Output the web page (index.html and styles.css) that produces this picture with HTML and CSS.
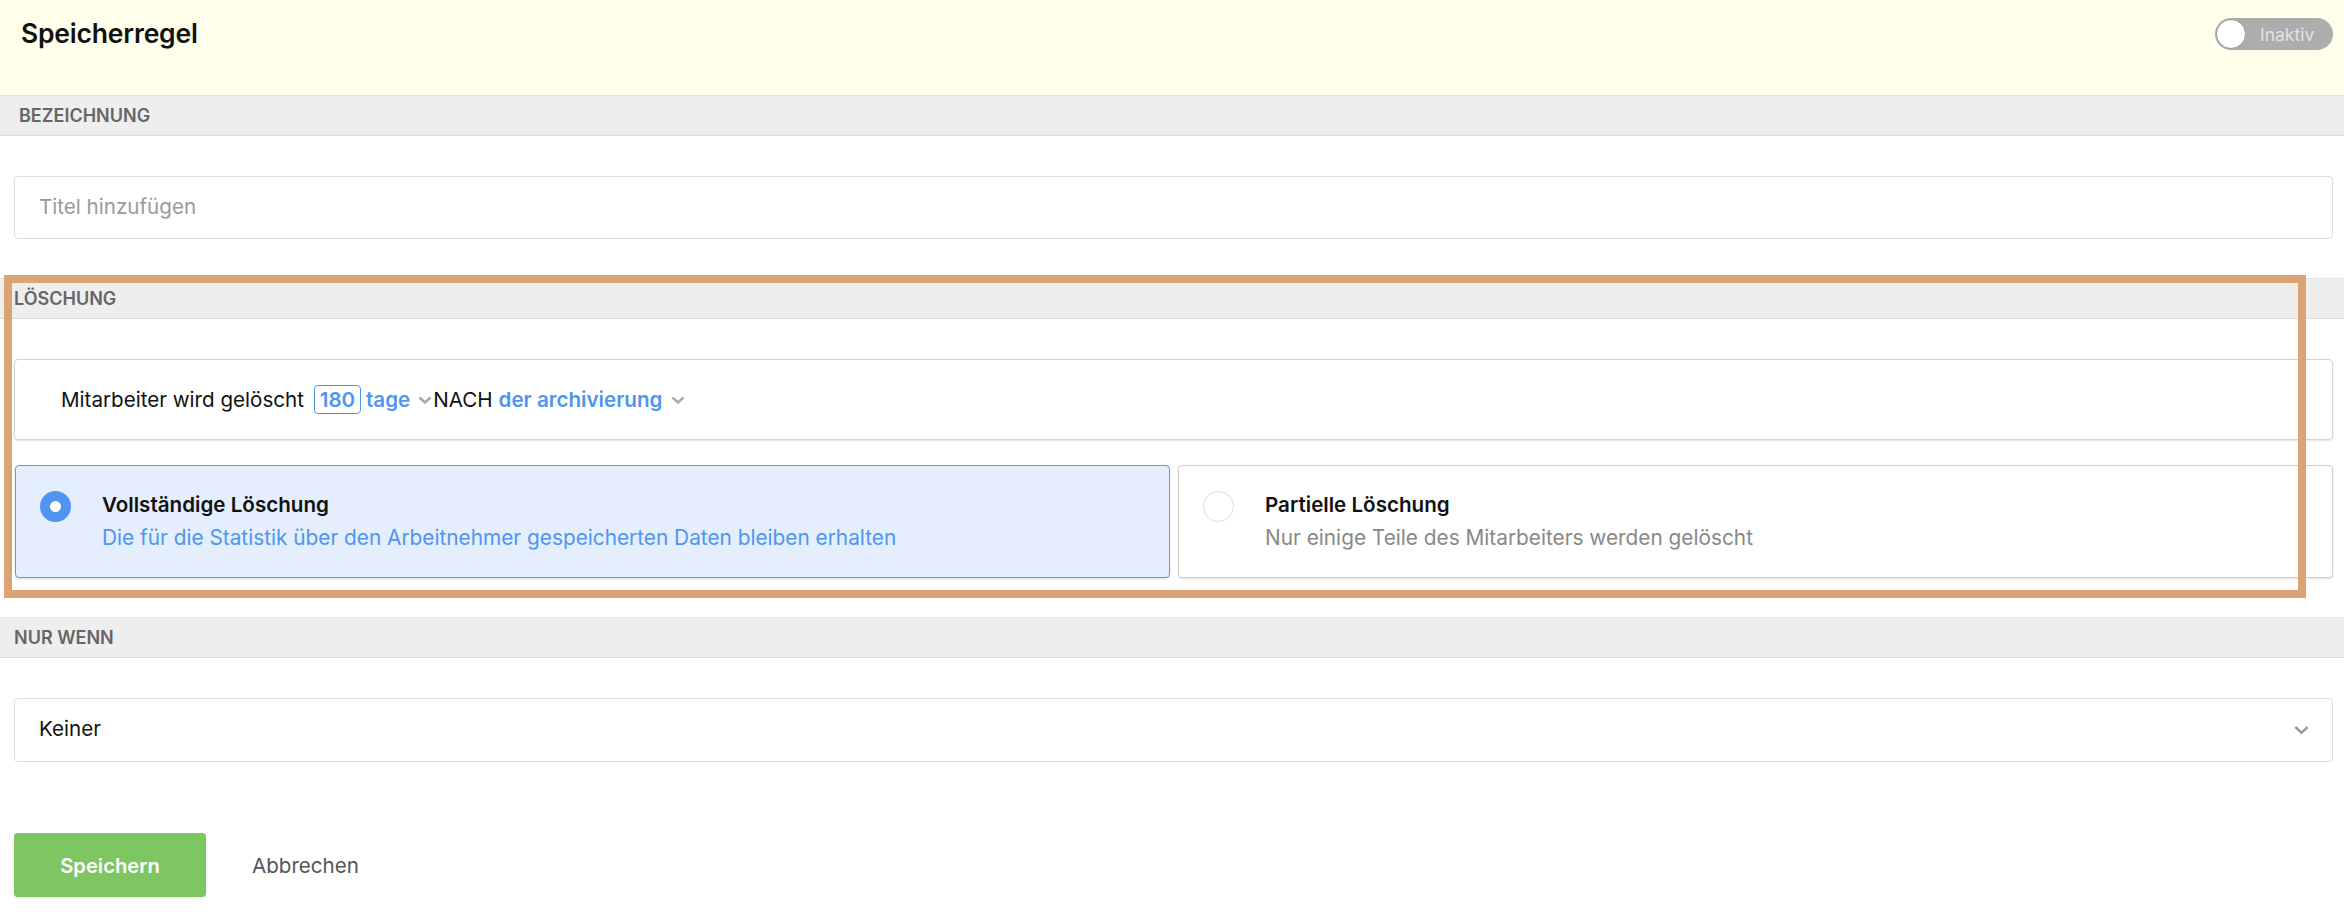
FILE: index.html
```html
<!DOCTYPE html>
<html lang="de">
<head>
<meta charset="utf-8">
<title>Speicherregel</title>
<link rel="stylesheet" href="styles.css">
</head>
<body>
<div class="page">
  <header class="topbar">
    <h1 class="title">Speicherregel</h1>
    <div class="toggle">
      <span class="toggle-knob"></span>
      <span class="toggle-label">Inaktiv</span>
    </div>
  </header>

  <section class="section">
    <div class="section-head section-head-first">BEZEICHNUNG</div>
    <div class="section-body">
      <div class="field"><span class="placeholder">Titel hinzufügen</span></div>
    </div>
  </section>

  <section class="section">
    <div class="section-head">LÖSCHUNG</div>
    <div class="section-body">
      <div class="condition">
        <span class="cond-text">Mitarbeiter wird gelöscht</span>
        <span class="num-box">180</span>
        <span class="blue">tage</span>
        <svg class="chev-small" viewBox="0 0 14 8" width="14" height="8"><path d="M1.5 1.5 L7 6.5 L12.5 1.5" fill="none" stroke="#aaa" stroke-width="2.5"/></svg>
        <span class="cond-text">NACH</span>
        <span class="blue blue-gap">der archivierung</span>
        <svg class="chev-small chev-gap" viewBox="0 0 14 8" width="14" height="8"><path d="M1.5 1.5 L7 6.5 L12.5 1.5" fill="none" stroke="#aaa" stroke-width="2.5"/></svg>
      </div>
      <div class="choices">
        <div class="choice choice-selected">
          <span class="radio radio-on"></span>
          <div class="choice-text">
            <div class="choice-title">Vollständige Löschung</div>
            <div class="choice-desc">Die für die Statistik über den Arbeitnehmer gespeicherten Daten bleiben erhalten</div>
          </div>
        </div>
        <div class="choice">
          <span class="radio"></span>
          <div class="choice-text">
            <div class="choice-title">Partielle Löschung</div>
            <div class="choice-desc">Nur einige Teile des Mitarbeiters werden gelöscht</div>
          </div>
        </div>
      </div>
    </div>
  </section>

  <section class="section">
    <div class="section-head">NUR WENN</div>
    <div class="section-body">
      <div class="field select">
        <span class="value">Keiner</span>
        <svg class="chev" viewBox="0 0 16 10" width="15" height="10"><path d="M1.5 1.8 L8 8 L14.5 1.8" fill="none" stroke="#999" stroke-width="2.6"/></svg>
      </div>
    </div>
  </section>

  <footer class="actions">
    <button class="btn-save" type="button">Speichern</button>
    <button class="btn-cancel" type="button">Abbrechen</button>
  </footer>

  <div class="highlight"></div>
</div>
</body>
</html>
```

FILE: styles.css
```css
* { box-sizing: border-box; }

html, body {
  margin: 0;
  padding: 0;
  background: #ffffff;
}

body {
  font-family: Inter, "Liberation Sans", Arial, sans-serif;
  color: #111;
}

.page {
  position: relative;
  width: 2344px;
  min-height: 916px;
}

.topbar {
  height: 95px;
  background: #ffffeb;
  display: flex;
  justify-content: space-between;
  align-items: flex-start;
  padding: 17px 11px 0 21px;
}

.title {
  margin: 0;
  font-size: 26.5px;
  line-height: 32px;
  font-weight: 600;
  color: #111;
  letter-spacing: -0.2px;
}

.toggle {
  width: 118px;
  height: 32px;
  margin-top: 1px;
  border-radius: 16px;
  background: #adadad;
  display: flex;
  align-items: center;
  padding: 0 0 0 1px;
}

.toggle-knob {
  width: 30px;
  height: 30px;
  border-radius: 50%;
  background: #fff;
  border: 1px solid #9a9a9a;
}

.toggle-label {
  margin-left: 14px;
  font-size: 17.5px;
  color: #e2e2e2;
}

.section-head {
  height: 41px;
  background: #eeeeee;
  border-top: 1px solid #e3e3e3;
  border-bottom: 1px solid #dcdcdc;
  display: flex;
  align-items: center;
  padding-left: 14px;
  font-size: 18px;
  font-weight: 600;
  color: #666;
}

.section-head-first {
  padding-left: 19px;
}

.section-body {
  padding: 40px 11px 39px 14px;
}

.field {
  height: 63px;
  border: 1px solid #dddddd;
  border-radius: 4px;
  display: flex;
  align-items: center;
  padding: 0 0 3px 24px;
  font-size: 20.6px;
}

.placeholder {
  color: #9a9a9a;
}

.select {
  height: 64px;
  justify-content: space-between;
  padding-right: 23px;
}

.value {
  color: #111;
}

.chev {
  display: block;
  margin-top: 2px;
}

.condition {
  height: 81px;
  border: 1px solid #d2d2d2;
  border-radius: 4px;
  box-shadow: 0 1px 2px rgba(0, 0, 0, 0.12);
  display: flex;
  align-items: center;
  padding-left: 46px;
  font-size: 20.6px;
}

.cond-text {
  color: #111;
}

.num-box {
  margin: 0 5px 0 10px;
  width: 47px;
  height: 29px;
  border: 1px solid #4f95f0;
  border-radius: 4px;
  display: flex;
  align-items: center;
  justify-content: center;
  color: #4f95f0;
  font-weight: 600;
}

.blue {
  color: #4f95f0;
  font-weight: 600;
}

.blue-gap {
  margin-left: 6px;
}

.chev-small {
  display: block;
  margin: 0 1px 0 8px;
}

.chev-gap {
  margin-left: 9px;
}

.choices {
  margin-top: 25px;
  display: flex;
  gap: 8px;
  padding-left: 1px;
}

.choice {
  flex: 1;
  height: 113px;
  border: 1px solid #cfcfcf;
  border-radius: 4px;
  box-shadow: 0 1px 2px rgba(0, 0, 0, 0.12);
  background: #fff;
  display: flex;
  align-items: flex-start;
  padding: 25px 0 0 24px;
}

.choice-selected {
  background: #e4eefc;
  border-color: #5a9bef;
}

.radio {
  flex: none;
  width: 31px;
  height: 31px;
  border-radius: 50%;
  border: 1px solid #dddddd;
  background: #fff;
}

.radio-on {
  border: 10px solid #4f95f0;
}

.choice-text {
  margin-left: 31px;
  padding-top: 2px;
}

.choice-title {
  font-size: 20.6px;
  line-height: 24px;
  font-weight: 600;
  color: #111;
}

.choice-desc {
  margin-top: 9px;
  font-size: 20.8px;
  line-height: 24px;
  color: #888;
}

.choice-selected .choice-desc {
  color: #4f95f0;
}

.actions {
  padding: 32px 0 0 14px;
  display: flex;
  align-items: center;
}

.btn-save {
  width: 192px;
  height: 64px;
  border: none;
  border-radius: 4px;
  background: #7ec662;
  box-shadow: 0 1px 3px rgba(0, 0, 0, 0.12);
  color: #fff;
  font-family: inherit;
  font-size: 20.2px;
  font-weight: 600;
  padding: 0;
}

.btn-cancel {
  margin-left: 46px;
  border: none;
  background: none;
  color: #555;
  font-family: inherit;
  font-size: 20.6px;
  padding: 0;
}

.highlight {
  position: absolute;
  left: 4px;
  top: 275px;
  width: 2302px;
  height: 323px;
  border: 8px solid #dca374;
  pointer-events: none;
}
```
